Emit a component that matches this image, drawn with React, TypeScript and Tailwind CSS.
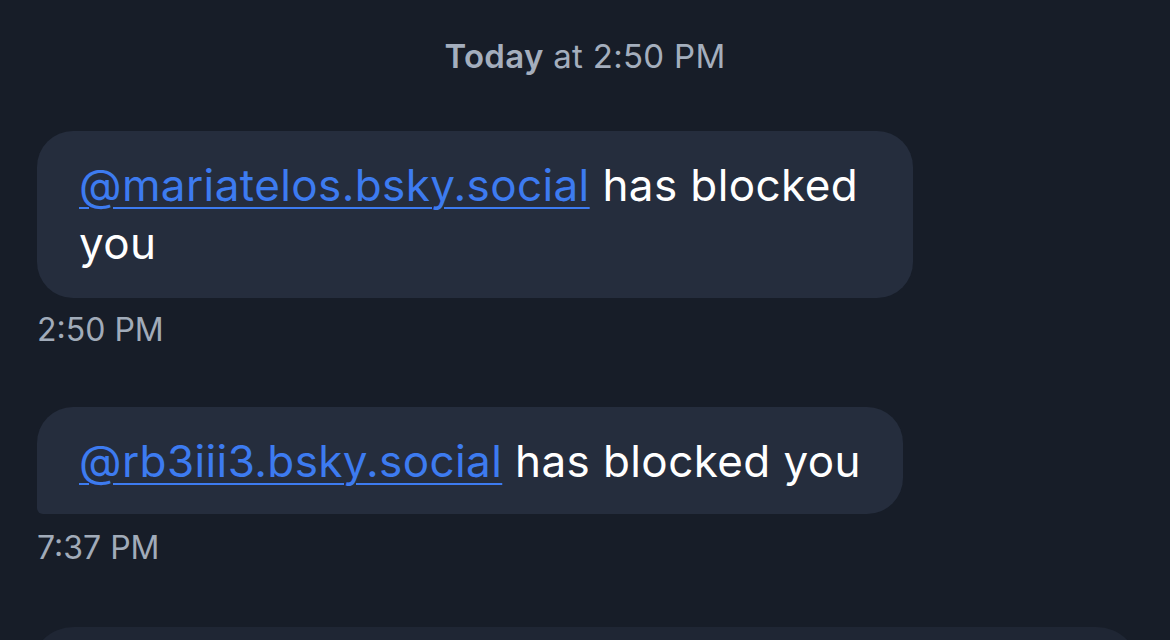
export default function App() {
  return (
    <div
      className="w-[1170px] h-[640px] overflow-hidden bg-[#171d28] px-[37px] flex flex-col"
      style={{ fontFamily: "Inter, 'Noto Sans', sans-serif" }}
    >
      <p className="mt-[36px] text-center text-[33px] leading-[40px] tracking-[0.3px] text-[#a4aebd]">
        <span className="font-semibold">Today</span> at 2:50 PM
      </p>

      <div className="mt-[55px] self-start max-w-[876px] rounded-[36px] bg-[#252d3d] px-[42px] pt-[25px] pb-[26px] text-[44px] leading-[58px] tracking-[0.4px] text-white">
        <a className="text-[#3d7bf0] underline decoration-[2px] underline-offset-[6px]">@mariatelos.bsky.social</a> has blocked you
      </div>
      <p className="mt-[13px] text-[32px] leading-[38px] text-[#a1abb9]">2:50 PM</p>

      <div className="mt-[58px] self-start max-w-[876px] rounded-[36px] rounded-bl-[6px] bg-[#252d3d] px-[42px] pt-[25px] pb-[24px] text-[44px] leading-[58px] tracking-[0.4px] text-white">
        <a className="text-[#3d7bf0] underline decoration-[2px] underline-offset-[6px]">@rb3iii3.bsky.social</a> has blocked you
      </div>
      <p className="mt-[15px] text-[32px] leading-[38px] text-[#a1abb9]">7:37 PM</p>

      <div className="mt-[60px] -mx-[7px] h-[120px] shrink-0 rounded-[44px] bg-[#1f2634]" />
    </div>
  );
}
